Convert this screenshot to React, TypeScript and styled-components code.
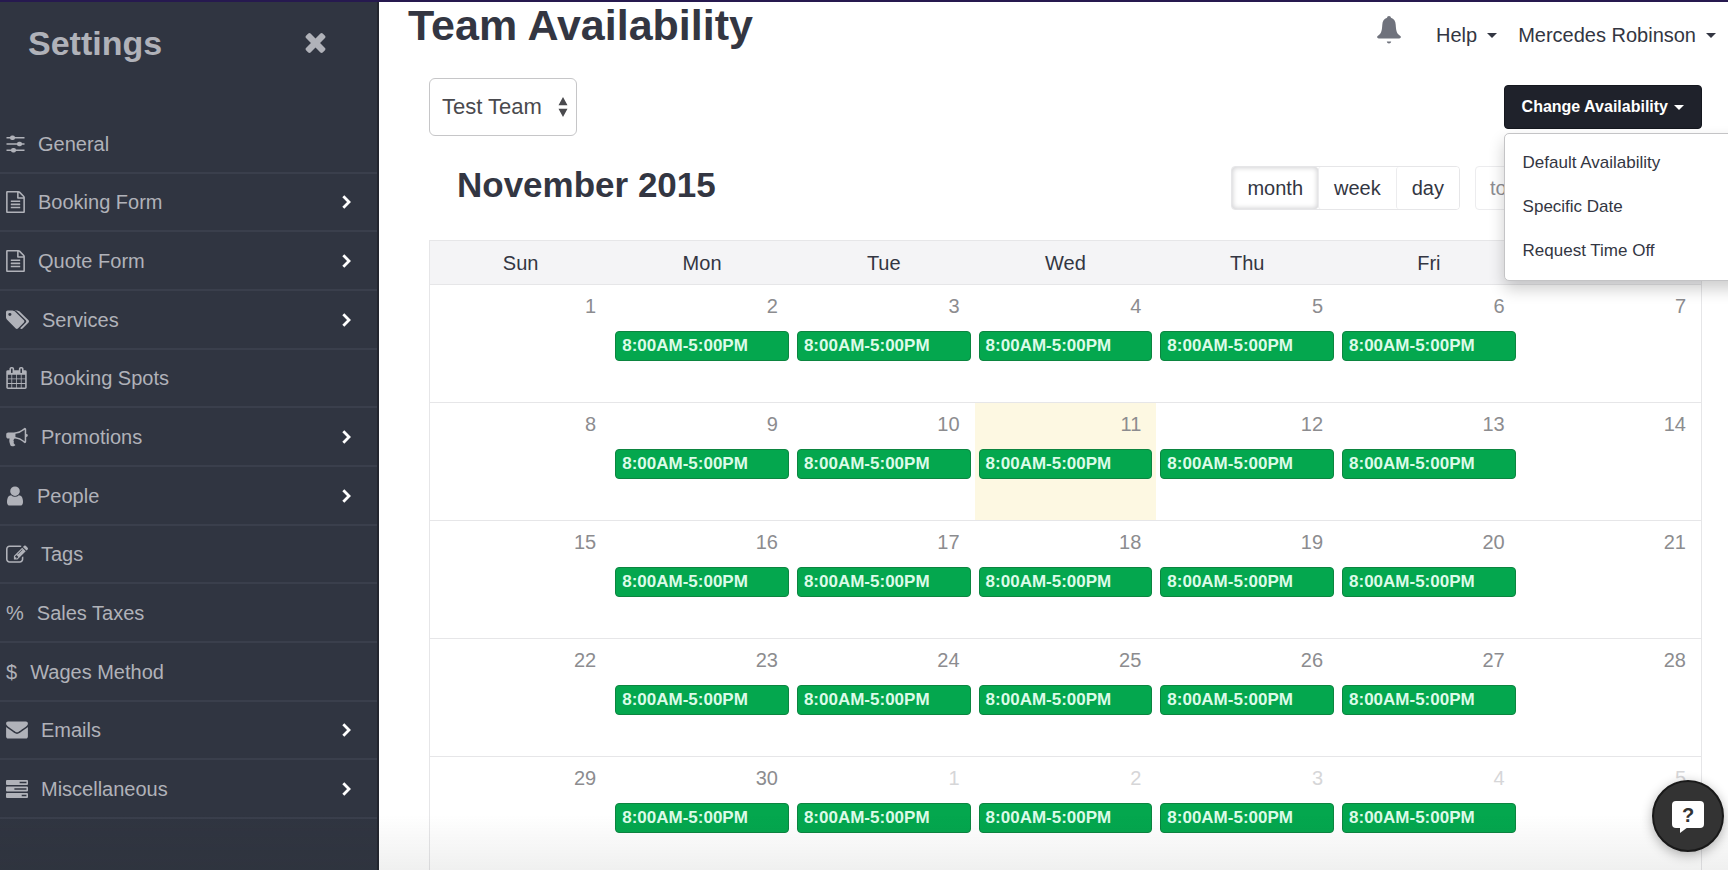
import React from "react";
import styled, { createGlobalStyle } from "styled-components";

const GlobalStyle = createGlobalStyle`
  * { box-sizing: border-box; }
  body {
    margin: 0;
    background: #fff;
    color: #333642;
    font-family: "Liberation Sans", Arial, sans-serif;
    font-size: 20px;
    line-height: 24px;
  }
  a { color: inherit; text-decoration: none; }
  button, select { font: inherit; color: inherit; cursor: pointer; }
`;

const Shell = styled.div`
  display: flex;
  height: 100vh;
  overflow: hidden;
  border-top: 2px solid #26194f;
`;

const Sidebar = styled.aside`
  flex: 0 0 379px;
  background: #303541;
  border-right: 2px solid #23262f;
  color: #b0b2b9;
`;

const SidebarHead = styled.header`
  display: flex;
  align-items: center;
  justify-content: space-between;
  height: 113px;
  padding: 0 51px 32px 28px;
`;

const SidebarTitle = styled.h2`
  margin: 0;
  font-size: 34px;
  line-height: 40px;
`;

const PlainButton = styled.button`
  display: flex;
  align-items: center;
  padding: 0;
  border: 0;
  background: none;
`;

const NavList = styled.ul`
  display: grid;
  grid-auto-rows: 1fr;
  height: 704px;
  margin: 0;
  padding: 0;
  list-style: none;
`;

const NavItem = styled.li`
  border-bottom: 2px solid #3a3f4c;
`;

const NavLink = styled.a`
  display: flex;
  align-items: center;
  gap: 13px;
  height: 100%;
  padding: 1px 26px 0 6px;

  svg { flex: none; }
`;

const NavLabel = styled.span`
  flex: 1;
`;

const Main = styled.main`
  flex: 1;
  min-width: 0;
`;

const Header = styled.header`
  display: flex;
  justify-content: space-between;
  height: 76px;
  padding: 0 12px 0 29px;
`;

const PageTitle = styled.h1`
  margin: 0;
  font-size: 43px;
  line-height: 46px;
`;

const TopNav = styled.nav`
  display: flex;
  align-items: flex-start;
  gap: 21px;
  padding-top: 21px;
`;

const BellButton = styled(PlainButton)`
  margin: -7px 14px 0 0;
  color: #6f727c;
`;

const MenuButton = styled(PlainButton)`
  gap: 10px;
`;

const Caret = styled.span`
  border: 5px solid transparent;
  border-top-color: currentColor;
  border-bottom: 0;
`;

const Content = styled.div`
  padding: 0 26px 0 50px;
`;

const Toolbar = styled.div`
  display: flex;
  align-items: center;
  justify-content: space-between;
`;

const SelectBox = styled.label`
  position: relative;
  color: #4a4a4e;
  font-size: 22px;

  svg {
    position: absolute;
    right: 9px;
    top: 19px;
    pointer-events: none;
  }
`;

const TeamSelect = styled.select`
  width: 148px;
  height: 58px;
  padding: 0 12px;
  appearance: none;
  background: #fff;
  border: 1px solid #c6c6c8;
  border-radius: 6px;
`;

const Dropdown = styled.div`
  position: relative;
`;

const DarkButton = styled.button`
  display: flex;
  align-items: center;
  gap: 6px;
  height: 44px;
  padding: 0 17px;
  border: 1px solid #15181f;
  border-radius: 4px;
  background: #1f222b;
  color: #fff;
  font-size: 16px;
  font-weight: bold;
`;

const Menu = styled.ul`
  position: absolute;
  z-index: 2;
  top: 48px;
  left: 0;
  width: 240px;
  margin: 0;
  padding: 7px 0;
  list-style: none;
  background: #fff;
  border: 1px solid #c4c4c6;
  border-radius: 5px;
  box-shadow: 0 8px 16px rgba(0, 0, 0, 0.2);
  font-size: 17px;
  line-height: 44px;

  a { display: block; padding: 0 18px; }
`;

const CalendarHead = styled.div`
  display: flex;
  justify-content: space-between;
  padding: 30px 13px 30px 28px;
`;

const MonthTitle = styled.h2`
  margin: 0;
  font-size: 35px;
  line-height: 38px;
`;

const Controls = styled.div`
  display: flex;
  gap: 15px;
`;

const Segments = styled.div`
  display: flex;
  border: 1px solid #e6e6e8;
  border-radius: 4px;
`;

const Segment = styled.button<{ $active?: boolean }>`
  height: 42px;
  padding: 0 15px;
  background: #fff;
  border: 0;
  border-radius: 3px;
  box-shadow: ${(p) => (p.$active ? "inset 0 0 5px 1px #d2d2d4" : "none")};

  & + & { border-left: 1px solid #ececee; }
`;

const TodayButton = styled.button`
  width: 214px;
  height: 44px;
  padding: 0 14px;
  text-align: left;
  background: #fff;
  border: 1px solid #ececee;
  border-radius: 4px;
  color: #8d8d92;
`;

const Calendar = styled.table`
  width: 100%;
  table-layout: fixed;
  border-collapse: collapse;
  border: 1px solid #e6e6e8;
`;

const DayHead = styled.th`
  height: 44px;
  padding: 0;
  background: #f4f4f6;
  font-weight: normal;
`;

const DayCell = styled.td<{ $today: boolean }>`
  height: 118px;
  padding: 9px 4px 0;
  vertical-align: top;
  border-top: 1px solid #e6e6e8;
  background: ${(p) => (p.$today ? "#fdf8e2" : "transparent")};
`;

const DayNumber = styled.div<{ $muted: boolean }>`
  padding-right: 11px;
  text-align: right;
  color: ${(p) => (p.$muted ? "#d6d6d8" : "#8c8c8f")};
`;

const Shift = styled.a`
  display: block;
  height: 30px;
  margin-top: 13px;
  padding-left: 6px;
  border: 1px solid #0c8540;
  border-radius: 4px;
  background: #04a74e;
  color: #dcfbe8;
  font-size: 17px;
  font-weight: bold;
  line-height: 27px;
`;

const BottomFade = styled.div`
  position: fixed;
  right: 0;
  bottom: 0;
  left: 0;
  height: 56px;
  pointer-events: none;
  background: linear-gradient(transparent, rgba(40, 45, 40, 0.07));
`;

const HelpButton = styled.button`
  position: fixed;
  right: 4px;
  bottom: 18px;
  z-index: 3;
  display: flex;
  align-items: center;
  justify-content: center;
  width: 72px;
  height: 72px;
  padding: 0;
  border: 2px solid #191919;
  border-radius: 50%;
  background: #333;
  box-shadow: 0 3px 12px rgba(0, 0, 0, 0.3);
`;

const QuestionBubble = styled.span`
  position: relative;
  width: 32px;
  height: 27px;
  margin-top: -4px;
  border-radius: 4px;
  background: #fff;
  color: #333;
  font-size: 20px;
  font-weight: bold;
  line-height: 28px;

  &::after {
    content: "";
    position: absolute;
    left: 8px;
    top: 26px;
    border-top: 6px solid #fff;
    border-right: 8px solid transparent;
  }
`;

type GlyphProps = { w: number; h: number; box: string; d: string };

const Glyph = ({ w, h, box, d }: GlyphProps) => (
  <svg width={w} height={h} viewBox={box} fill="currentColor" fillRule="nonzero" aria-hidden="true">
    <path d={d} />
  </svg>
);

const Sliders = () => (
  <svg width="19" height="18" viewBox="0 0 18 18" fill="currentColor" aria-hidden="true">
    <path d="M0 2h18v1.400H0zM0 8.300h18v1.400H0zM0 14.600h18V16H0z" />
    <rect x="3.500" y="0.500" width="5" height="4.400" rx="2" />
    <rect x="10.500" y="6.800" width="5" height="4.400" rx="2" />
    <rect x="4.500" y="13.100" width="5" height="4.400" rx="2" />
  </svg>
);

const FileText = () => (
  <Glyph w={19} h={22} box="128 0 1536 1792" d="M1596 380q28 28 48 76t20 88v1152q0 40-28 68t-68 28h-1344q-40 0-68-28t-28-68v-1600q0-40 28-68t68-28h896q40 0 88 20t76 48zm-444-244v376h376q-10-29-22-41l-313-313q-12-12-41-22zm384 1528v-1024h-416q-40 0-68-28t-28-68v-416h-768v1536h1280zm-1024-864q0-14 9-23t23-9h704q14 0 23 9t9 23v64q0 14-9 23t-23 9h-704q-14 0-23-9t-9-23v-64zm736 224q14 0 23 9t9 23v64q0 14-9 23t-23 9h-704q-14 0-23-9t-9-23v-64q0-14 9-23t23-9h704zm0 256q14 0 23 9t9 23v64q0 14-9 23t-23 9h-704q-14 0-23-9t-9-23v-64q0-14 9-23t23-9h704z" />
);

const TagsIcon = () => (
  <Glyph w={23} h={20} box="0 96 1900 1620" d="M448 448q0-53-37.500-90.500t-90.500-37.500-90.500 37.500-37.500 90.500 37.500 90.500 90.500 37.500 90.500-37.500 37.500-90.500zm1067 576q0 53-37 90l-491 492q-39 37-91 37-53 0-90-37l-715-716q-38-37-64.500-101t-26.500-117v-416q0-52 38-90t90-38h416q53 0 117 26.500t102 64.500l715 714q37 39 37 91zm384 0q0 53-37 90l-491 492q-39 37-91 37-36 0-59-14t-53-45l470-470q37-37 37-90 0-52-37-91l-715-714q-38-38-102-64.500t-117-26.500h224q53 0 117 26.500t102 64.500l715 714q37 39 37 91z" />
);

const CalendarIcon = () => (
  <Glyph w={21} h={22} box="64 0 1664 1792" d="M192 1664h288v-288h-288v288zm352 0h320v-288h-320v288zm-352-352h288v-320h-288v320zm352 0h320v-320h-320v320zm-352-384h288v-288h-288v288zm736 736h320v-288h-320v288zm-384-736h320v-288h-320v288zm768 736h288v-288h-288v288zm-384-352h320v-320h-320v320zm-352-864v-288q0-13-9.500-22.500t-22.500-9.500h-64q-13 0-22.500 9.500t-9.500 22.500v288q0 13 9.500 22.500t22.500 9.500h64q13 0 22.500-9.500t9.500-22.500zm736 864h288v-320h-288v320zm-384-384h320v-288h-320v288zm384 0h288v-288h-288v288zm32-480v-288q0-13-9.500-22.500t-22.500-9.500h-64q-13 0-22.500 9.500t-9.500 22.500v288q0 13 9.500 22.500t22.500 9.500h64q13 0 22.500-9.500t9.500-22.500zm384-64v1280q0 52-38 90t-90 38h-1408q-52 0-90-38t-38-90v-1280q0-52 38-90t90-38h128v-96q0-66 47-113t113-47h64q66 0 113 47t47 113v96h384v-96q0-66 47-113t113-47h64q66 0 113 47t47 113v96h128q52 0 90 38t38 90z" />
);

const Bullhorn = () => (
  <Glyph w={22} h={20} box="0 64 1792 1664" d="M1664 640q53 0 90.500 37.500t37.500 90.500-37.500 90.500-90.500 37.500v384q0 52-38 90t-90 38q-417-347-812-380-58 19-91 66t-31 100.500 40 92.500q-20 33-23 65.500t6 58 33.500 55 48 50 61.500 50.500q-29 58-111.500 83t-168.500 11.500-132-55.500q-7-23-29.500-87.500t-32-94.500-23-89-15-101 3.500-98.500 22-110.500h-122q-66 0-113-47t-47-113v-192q0-66 47-113t113-47h480q435 0 896-384 52 0 90 38t38 90v384zm-128 604v-954q-394 302-768 343v270q377 42 768 341z" />
);

const UserIcon = () => (
  <Glyph w={18} h={20} box="256 96 1280 1600" d="M1536 1399q0 109-62.500 187t-150.500 78h-854q-88 0-150.500-78t-62.500-187q0-85 8.500-160.500t31.500-152 58.500-131 94-89 134.500-34.500q131 128 313 128t313-128q76 0 134.500 34.500t94 89 58.500 131 31.500 152 8.500 160.500zm-256-887q0 159-112.500 271.500t-271.500 112.500-271.500-112.500-112.500-271.500 112.500-271.500 271.500-112.500 271.500 112.500 112.500 271.500z" />
);

const PencilSquare = () => (
  <Glyph w={22} h={18} box="0 100 1784 1450" d="M888 1184l116-116-152-152-116 116v56h96v96h56zm440-720q-16-16-33 1l-350 350q-17 17-1 33t33-1l350-350q17-17 1-33zm80 594v190q0 119-84.500 203.500t-203.500 84.500h-832q-119 0-203.500-84.500t-84.500-203.500v-832q0-119 84.500-203.500t203.500-84.500h832q63 0 117 25 15 7 18 23 3 17-9 29l-49 49q-14 14-32 8-23-6-45-6h-832q-66 0-113 47t-47 113v832q0 66 47 113t113 47h832q66 0 113-47t47-113v-126q0-13 9-22l64-64q15-15 35-7t20 29zm-96-738l288 288-672 672h-288v-288zm444 132l-92 92-288-288 92-92q28-28 68-28t68 28l152 152q28 28 28 68t-28 68z" />
);

const Envelope = () => (
  <Glyph w={22} h={18} box="0 220 1792 1480" d="M1792 710v794q0 66-47 113t-113 47h-1472q-66 0-113-47t-47-113v-794q44 49 101 87 362 246 497 345 57 42 92.500 65.500t94.500 48 110 24.500h2q51 0 110-24.500t94.500-48 92.500-65.500q170-123 498-345 57-39 100-87zm0-294q0 79-49 151t-122 123q-376 261-468 325-10 7-42.500 31t-54 38.500-52 32.500-57.500 27-50 9h-2q-23 0-50-9t-57.500-27-52-32.500-54-38.500-42.500-31q-91-64-262-182.500t-205-142.500q-62-42-117-115.500t-55-136.500q0-78 41.500-130t118.500-52h1472q65 0 112.500 47t47.500 113z" />
);

const Tasks = () => (
  <svg width="22" height="18" viewBox="0 0 21 18" preserveAspectRatio="none" fill="currentColor" fillRule="evenodd" aria-hidden="true">
    <path d="M1 0h19a1 1 0 0 1 1 1v3a1 1 0 0 1-1 1H1a1 1 0 0 1-1-1V1a1 1 0 0 1 1-1zM13 1.800h6.500v1.400H13z" />
    <path d="M1 6.500h19a1 1 0 0 1 1 1v3a1 1 0 0 1-1 1H1a1 1 0 0 1-1-1v-3a1 1 0 0 1 1-1zM8 8.300h11.500v1.400H8z" />
    <path d="M1 13h19a1 1 0 0 1 1 1v3a1 1 0 0 1-1 1H1a1 1 0 0 1-1-1v-3a1 1 0 0 1 1-1zM15 14.800h4.500v1.400H15z" />
  </svg>
);

const Chevron = () => (
  <svg width="9" height="14" viewBox="0 0 9 14" fill="none" stroke="#fff" strokeWidth="2.800" aria-hidden="true">
    <path d="M1.300 1.300L7 7l-5.700 5.700" />
  </svg>
);

const Cross = () => (
  <Glyph w={21} h={21} box="302 302 1188 1252" d="M1490 1322q0 40-28 68l-136 136q-28 28-68 28t-68-28l-294-294-294 294q-28 28-68 28t-68-28l-136-136q-28-28-28-68t28-68l294-294-294-294q-28-28-28-68t28-68l136-136q28-28 68-28t68 28l294 294 294-294q28-28 68-28t68 28l136 136q28 28 28 68t-28 68l-294 294 294 294q28 28 28 68z" />
);

const Bell = () => (
  <Glyph w={24} h={28} box="0 0 24 28" d="M12 0c1.200 0 1.900.7 1.900 1.800 3.200.9 4.600 3.600 4.800 7 .3 5.200.9 8.200 3.100 10 .9.700 1.700 1.200 2 1.800.3.900-.4 1.700-1.600 2H1.800c-1.200-.3-1.900-1.100-1.600-2 .3-.6 1.100-1.100 2-1.800 2.200-1.800 2.800-4.800 3.100-10 .2-3.400 1.600-6.100 4.800-7C10.100.7 10.800 0 12 0zM9.800 25.500h4.400c-.2 1.200-1 1.900-2.200 1.900s-2-.7-2.200-1.900z" />
);

const UpDown = () => (
  <svg width="10" height="20" viewBox="0 0 10 20" fill="#4a4a4e" aria-hidden="true">
    <path d="M5 0l4.500 8.300h-9zM5 20L.5 11.700h9z" />
  </svg>
);

const NAV: { label: string; icon: React.ReactNode; more?: boolean }[] = [
  { label: "General", icon: <Sliders /> },
  { label: "Booking Form", icon: <FileText />, more: true },
  { label: "Quote Form", icon: <FileText />, more: true },
  { label: "Services", icon: <TagsIcon />, more: true },
  { label: "Booking Spots", icon: <CalendarIcon /> },
  { label: "Promotions", icon: <Bullhorn />, more: true },
  { label: "People", icon: <UserIcon />, more: true },
  { label: "Tags", icon: <PencilSquare /> },
  { label: "Sales Taxes", icon: <span>%</span> },
  { label: "Wages Method", icon: <span>$</span> },
  { label: "Emails", icon: <Envelope />, more: true },
  { label: "Miscellaneous", icon: <Tasks />, more: true },
];

const DAYS = ["Sun", "Mon", "Tue", "Wed", "Thu", "Fri", "Sat"];
const TODAY = 11;
const MONTH_LENGTH = 30;
const WEEKS = [0, 1, 2, 3, 4].map((week) => DAYS.map((_, day) => week * 7 + day + 1));

export default function App() {
  return (
    <>
      <GlobalStyle />
      <Shell>
        <Sidebar>
          <SidebarHead>
            <SidebarTitle>Settings</SidebarTitle>
            <PlainButton aria-label="Close settings"><Cross /></PlainButton>
          </SidebarHead>
          <nav>
            <NavList>
              {NAV.map(({ label, icon, more }) => (
                <NavItem key={label}>
                  <NavLink href="#">
                    {icon}
                    <NavLabel>{label}</NavLabel>
                    {more && <Chevron />}
                  </NavLink>
                </NavItem>
              ))}
            </NavList>
          </nav>
        </Sidebar>
        <Main>
          <Header>
            <PageTitle>Team Availability</PageTitle>
            <TopNav>
              <BellButton aria-label="Notifications"><Bell /></BellButton>
              <MenuButton>Help <Caret /></MenuButton>
              <MenuButton>Mercedes Robinson <Caret /></MenuButton>
            </TopNav>
          </Header>
          <Content>
            <Toolbar>
              <SelectBox>
                <TeamSelect aria-label="Team" defaultValue="test">
                  <option value="test">Test Team</option>
                </TeamSelect>
                <UpDown />
              </SelectBox>
              <Dropdown>
                <DarkButton aria-expanded="true">Change Availability <Caret /></DarkButton>
                <Menu>
                  <li><a href="#">Default Availability</a></li>
                  <li><a href="#">Specific Date</a></li>
                  <li><a href="#">Request Time Off</a></li>
                </Menu>
              </Dropdown>
            </Toolbar>
            <CalendarHead>
              <MonthTitle>November 2015</MonthTitle>
              <Controls>
                <Segments>
                  <Segment $active>month</Segment>
                  <Segment>week</Segment>
                  <Segment>day</Segment>
                </Segments>
                <TodayButton>today</TodayButton>
              </Controls>
            </CalendarHead>
            <Calendar>
              <thead>
                <tr>{DAYS.map((day) => <DayHead key={day} scope="col">{day}</DayHead>)}</tr>
              </thead>
              <tbody>
                {WEEKS.map((week) => (
                  <tr key={week[0]}>
                    {week.map((date, day) => (
                      <DayCell key={date} $today={date === TODAY}>
                        <DayNumber $muted={date > MONTH_LENGTH}>
                          {date > MONTH_LENGTH ? date - MONTH_LENGTH : date}
                        </DayNumber>
                        {day > 0 && day < 6 && <Shift href="#">8:00AM-5:00PM</Shift>}
                      </DayCell>
                    ))}
                  </tr>
                ))}
              </tbody>
            </Calendar>
          </Content>
        </Main>
      </Shell>
      <BottomFade />
      <HelpButton aria-label="Help chat"><QuestionBubble>?</QuestionBubble></HelpButton>
    </>
  );
}
